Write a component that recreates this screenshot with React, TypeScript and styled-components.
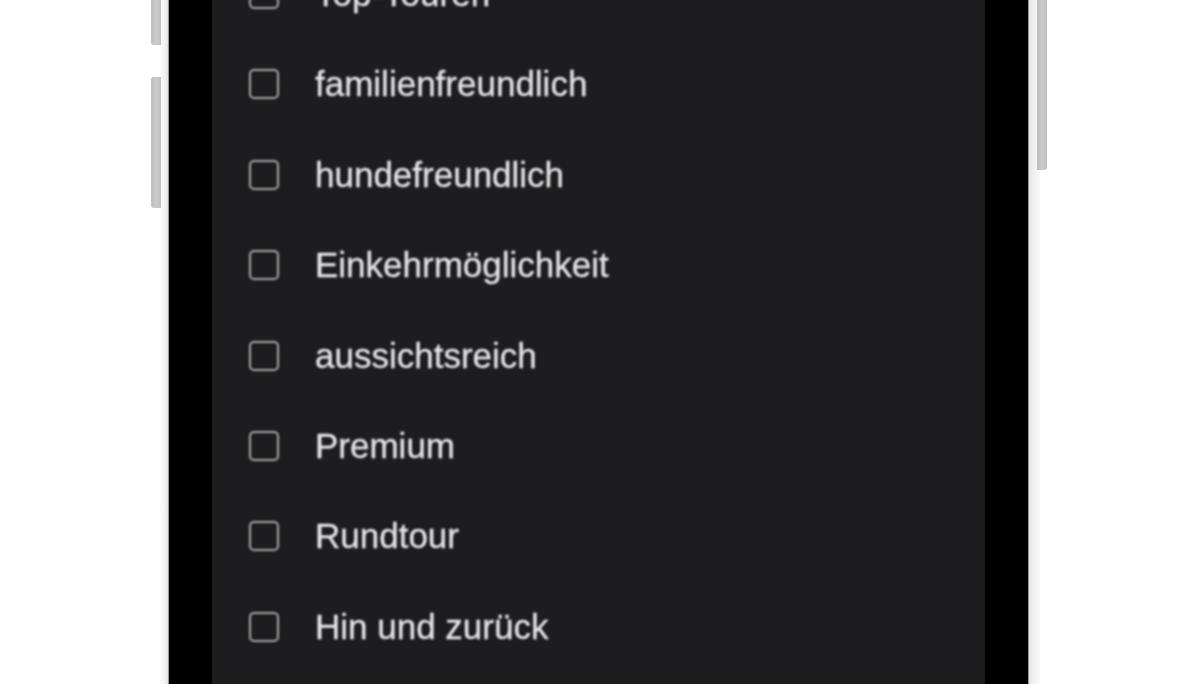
import React from "react";
import styled, { createGlobalStyle } from "styled-components";

const GlobalStyle = createGlobalStyle`
  html, body {
    margin: 0;
    padding: 0;
    background: #ffffff;
    overflow: hidden;
  }
`;

const Stage = styled.div`
  width: 1200px;
  height: 684px;
  overflow: hidden;
  display: flex;
  justify-content: center;
  background: #ffffff;
`;

const Phone = styled.div`
  position: relative;
  width: 880px;
  height: 684px;
  box-sizing: border-box;
  padding: 0 12px 0 9px;
  background: linear-gradient(
    to right,
    #fafafa 0px,
    #f1f1f1 5px,
    #e2e2e2 8px,
    #e2e2e2 calc(100% - 12px),
    #ededed calc(100% - 8px),
    #fafafa 100%
  );
`;

const SideButton = styled.div<{ $side: "left" | "right"; $top: number; $height: number }>`
  position: absolute;
  top: ${(p) => p.$top}px;
  height: ${(p) => p.$height}px;
  ${(p) => (p.$side === "left" ? "left: -9px;" : "right: -7px;")}
  width: 10px;
  border-radius: ${(p) => (p.$side === "left" ? "3px 0 0 3px" : "0 3px 3px 0")};
  background: linear-gradient(to right, #bdbdbd, #cbcbcb 50%, #bfbfbf);
  filter: blur(0.7px);
`;

const Bezel = styled.div`
  height: 100%;
  box-sizing: border-box;
  padding: 0 43px;
  background: #000000;
  box-shadow: 0 0 0 1px #9a9a9a;
`;

const Screen = styled.div`
  height: 100%;
  overflow: hidden;
  background: #1d1d1f;
`;

const List = styled.div`
  margin-top: -51.2px;
  padding-left: 37px;
  display: flex;
  flex-direction: column;
  filter: blur(0.8px);
`;

const Row = styled.div`
  height: 90.4px;
  display: flex;
  align-items: center;
  gap: 36px;
`;

const Box = styled.div`
  width: 30px;
  height: 30px;
  box-sizing: border-box;
  border: 2.5px solid #aaaaac;
  border-radius: 5px;
  flex: none;
`;

const Label = styled.span`
  font-family: "Liberation Sans", Arial, sans-serif;
  font-size: 35px;
  color: #e6e6e8;
  white-space: nowrap;
  -webkit-text-stroke: 0.3px #e6e6e8;
`;

const items = [
  "Top-Touren",
  "familienfreundlich",
  "hundefreundlich",
  "Einkehrmöglichkeit",
  "aussichtsreich",
  "Premium",
  "Rundtour",
  "Hin und zurück",
];

export default function App() {
  return (
    <>
      <GlobalStyle />
      <Stage>
        <Phone>
          <SideButton $side="left" $top={-10} $height={55} />
          <SideButton $side="left" $top={77} $height={131} />
          <SideButton $side="right" $top={-10} $height={180} />
          <Bezel>
            <Screen>
              <List>
                {items.map((t) => (
                  <Row key={t}>
                    <Box />
                    <Label>{t}</Label>
                  </Row>
                ))}
              </List>
            </Screen>
          </Bezel>
        </Phone>
      </Stage>
    </>
  );
}
